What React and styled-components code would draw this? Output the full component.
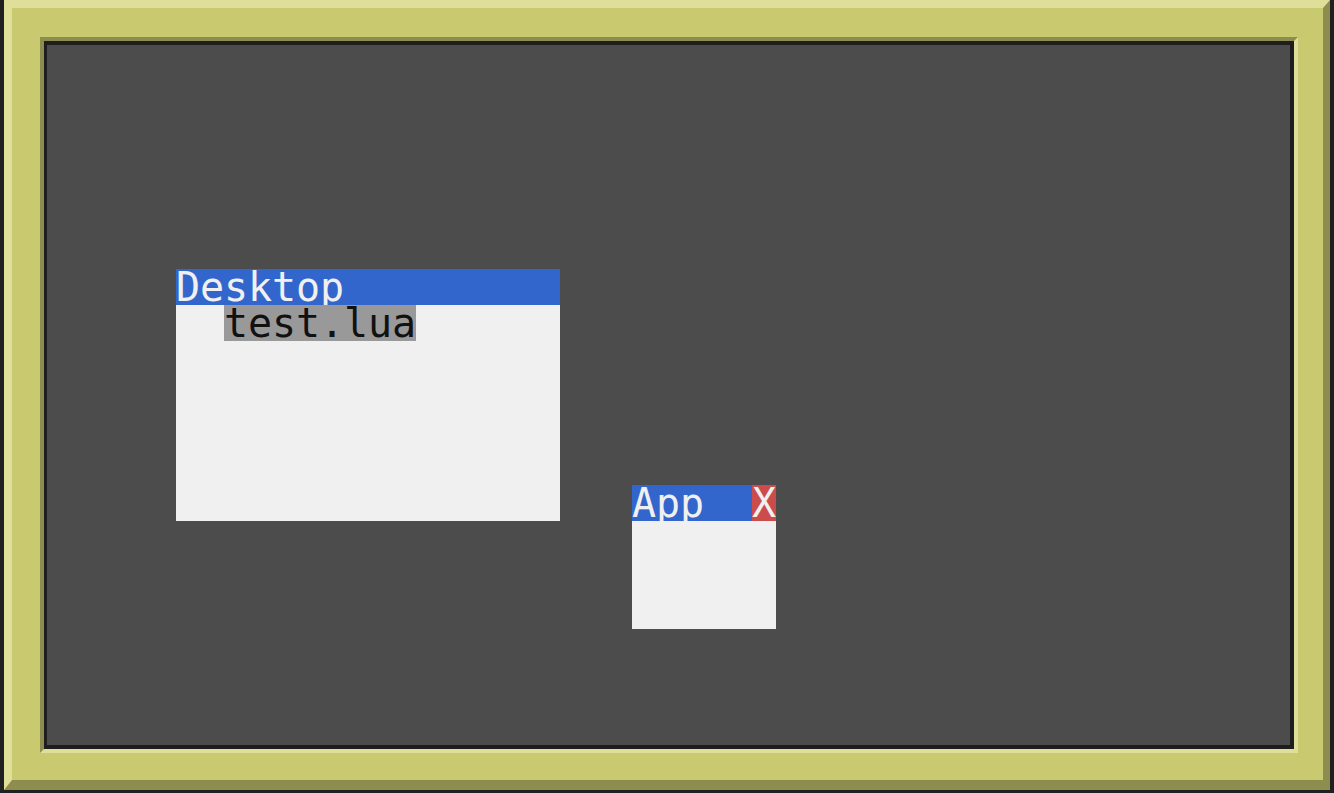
import React from 'react';
import styled, { createGlobalStyle } from 'styled-components';

const CELL_W = 24;
const CELL_H = 36;

const GlobalStyle = createGlobalStyle`
    html, body {
        margin: 0;
        padding: 0;
        background: #c9c970;
    }
`

const Monitor = styled.div`
    width: 1334px;
    height: 793px;
    box-sizing: border-box;
    background: #202020;
    padding: 0 4px 3px 4px;
    display: flex;
`
const Bezel = styled.div`
    flex: 1;
    display: flex;
    background: #c9c970;
    border-style: solid;
    border-width: 8px 7px 10px 8px;
    border-color: #e0df9a #8e8d50 #8e8d50 #e0df9a;
    padding: 29px 25px 27px 28px;
`
const Well = styled.div`
    flex: 1;
    display: flex;
    border-style: solid;
    border-width: 4px;
    border-color: #8e8d50 #e0df9a #e0df9a #8e8d50;
`
const Screen = styled.div`
    flex: 1;
    position: relative;
    background: #4c4c4c;
    border: 3px solid #1e1e1e;
    border-width: 4px 4px 4px 3px;
    overflow: hidden;
    font-family: "DejaVu Sans Mono", "Liberation Mono", monospace;
    font-size: 40px;
    line-height: ${CELL_H}px;
    letter-spacing: -0.08px;
`
const Window = styled.div`
    position: absolute;
    left: ${p => p.$x}px;
    top: ${p => p.$y}px;
    width: ${p => p.$cols * CELL_W}px;
    height: ${p => p.$rows * CELL_H}px;
    background: #f0f0f0;
    display: flex;
    flex-direction: column;
`
const TitleBar = styled.div`
    height: ${CELL_H}px;
    background: #3366cc;
    color: #f0f0f0;
    display: flex;
    white-space: pre;
    overflow: hidden;
`
const Title = styled.span`
    flex: 1;
    overflow: hidden;
`
const CloseButton = styled.span`
    width: ${CELL_W}px;
    background: #cc4c4c;
    color: #f0f0f0;
    text-align: center;
    overflow: hidden;
`
const Body = styled.div`
    flex: 1;
    display: flex;
    flex-direction: column;
`
const FileItem = styled.div`
    height: ${CELL_H}px;
    margin-left: ${p => p.$indent * CELL_W}px;
    align-self: flex-start;
    background: ${p => (p.$selected ? '#999999' : 'transparent')};
    color: #111111;
    white-space: pre;
    overflow: hidden;
`

const App = () => {
    return (
        <>
            <GlobalStyle />
            <Monitor>
                <Bezel>
                    <Well>
                        <Screen>
                            <Window $x={129} $y={224} $cols={16} $rows={7}>
                                <TitleBar>
                                    <Title>Desktop</Title>
                                </TitleBar>
                                <Body>
                                    <FileItem $indent={2} $selected>test.lua</FileItem>
                                </Body>
                            </Window>
                            <Window $x={585} $y={440} $cols={6} $rows={4}>
                                <TitleBar>
                                    <Title>App</Title>
                                    <CloseButton>X</CloseButton>
                                </TitleBar>
                            </Window>
                        </Screen>
                    </Well>
                </Bezel>
            </Monitor>
        </>
    )
}

export default App;
